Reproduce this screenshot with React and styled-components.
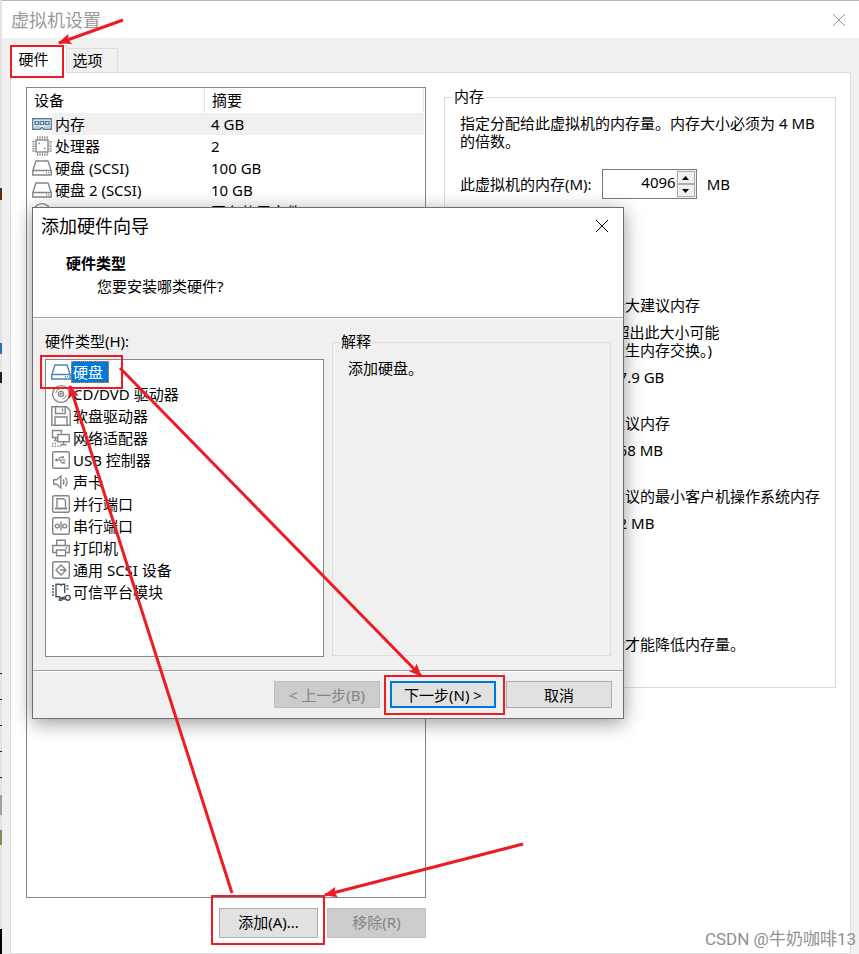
import React, { useCallback, useState } from 'react';
import styled, { createGlobalStyle } from 'styled-components';

const DEVICES = [
  { icon: 'memory', name: '内存', summary: '4 GB' },
  { icon: 'cpu', name: '处理器', summary: '2' },
  { icon: 'disk', name: '硬盘 (SCSI)', summary: '100 GB' },
  { icon: 'disk', name: '硬盘 2 (SCSI)', summary: '10 GB' },
  { icon: 'cd', name: 'CD/DVD (IDE)', summary: '正在使用文件 C:\\Downloads\\' },
];

const HARDWARE_TYPES = [
  { icon: 'disk', name: '硬盘' },
  { icon: 'cd', name: 'CD/DVD 驱动器' },
  { icon: 'floppy', name: '软盘驱动器' },
  { icon: 'network', name: '网络适配器' },
  { icon: 'usb', name: 'USB 控制器' },
  { icon: 'sound', name: '声卡' },
  { icon: 'parallel', name: '并行端口' },
  { icon: 'serial', name: '串行端口' },
  { icon: 'printer', name: '打印机' },
  { icon: 'scsi', name: '通用 SCSI 设备' },
  { icon: 'tpm', name: '可信平台模块' },
];

const ICON_SHAPES = {
  memory: (
    <>
      <path d="M.75 4.75h18.5v10.5h-7.5l-1-1.5h-1.5l-1 1.5H.75z" />
      <path d="M3 7.5h3.5v3H3zM8.25 7.5h3.5v3h-3.5zM13.5 7.5H17v3h-3.5z" />
      <path d="M2.5 13h5M12.5 13h5" strokeDasharray="1 1" />
    </>
  ),
  cpu: (
    <>
      <rect x="4" y="4" width="12" height="12" />
      <path d="M5 1.5h11M5 18.5h11" strokeWidth="2.4" strokeDasharray="1.2 1.2" />
      <path d="M1.5 5v11M18.5 5v11" strokeWidth="2.4" strokeDasharray="1.2 1.2" />
      <path d="M6.5 7.5h1.5M12 12.5h1.5" strokeWidth="1.6" />
    </>
  ),
  disk: (
    <>
      <path d="M4 3h12l3.2 9.5V17H.8v-4.5z" />
      <path d="M.8 12.5h18.4M14 14.8h1M16.2 14.8h1" />
    </>
  ),
  cd: (
    <>
      <circle cx="10" cy="10" r="8.4" />
      <circle cx="10" cy="10" r="2.6" />
      <circle cx="10" cy="10" r=".5" />
      <path d="M4.8 9.2a5.4 5.4 0 0 1 3.6-4.4M15.2 10.8a5.4 5.4 0 0 1-3.6 4.4" strokeWidth="1" />
    </>
  ),
  floppy: (
    <>
      <path d="M.8.8h14.7l3.7 3.7v14.7H.8z" />
      <path d="M4.5.8v6.7h9.7V.8M11.5 2.5v3" />
      <path d="M4 19v-8h12v8" />
    </>
  ),
  network: (
    <>
      <path d="M6.5 9.5h-5v-7h9v3M3 12.5h3M4.5 9.5v3" />
      <path d="M6.8 6.5h11.4v7.2H6.8zM12.5 14v2.5M9.5 16.8h6" />
      <path d="M1 15.5h5M1 18.3h9" strokeDasharray="1.3 1.3" />
    </>
  ),
  usb: (
    <>
      <rect x="1.7" y="1.7" width="16.6" height="16.6" rx="1.5" />
      <path d="M5.5 10h9.5M7.4 10l1.8-2.8h2M9 10l1.8 2.8h1.5" strokeWidth="1.1" />
      <path d="M4.5 10l1.5-1v2zM11.2 6.7h1.2v1h-1.2zM12.2 12.3h1.2v1h-1.2z" strokeWidth="1.1" />
    </>
  ),
  sound: (
    <>
      <path d="M2.7 7.7h3.1l4-3.7v12l-4-3.7H2.7z" />
      <path d="M12 7.5c1.2 1.5 1.2 3.5 0 5M14.3 5.8c2.2 2.4 2.2 6 0 8.4" />
    </>
  ),
  parallel: (
    <>
      <rect x="1.7" y="1.7" width="16.6" height="16.6" rx="1.5" />
      <path d="M6 13.5V4.8h6.5l2 2v6.7" />
      <path d="M4 14.5h12.3" strokeWidth="2" />
    </>
  ),
  serial: (
    <>
      <rect x="1.7" y="1.7" width="16.6" height="16.6" rx="1.5" />
      <circle cx="6.3" cy="10" r="1.9" />
      <circle cx="13.7" cy="10" r="1.9" />
      <path d="M10 5.5v9" />
    </>
  ),
  printer: (
    <>
      <path d="M5.7 7.5V2.3h8.6v5.2" />
      <path d="M5 14.5H1.7v-7h16.6v7H15" />
      <path d="M5.5 12h9v5.7h-9zM14.5 9.7H16" />
    </>
  ),
  scsi: (
    <>
      <rect x="1.7" y="1.7" width="16.6" height="16.6" rx="1.5" />
      <path d="M12.8 7.7L10 5l-5 5 5 5 2.8-2.7M9 10h6M12.8 7.7L15 10l-2.2 2.3" />
    </>
  ),
  tpm: (
    <>
      <path d="M13.7 11V2.2h-2.5L10 3.3 8.8 2.2H5v12.6h4.5" />
      <path d="M1 4h2M1 7h2M1 10h2M1 13h2M15.5 4h2M15.5 7h2" />
      <circle cx="16.8" cy="15.8" r="2.4" />
      <path d="M14.4 15l-6 1.4v1.9h2l1-1.3h3" />
    </>
  ),
};

const ICON_COLORS = {
  memory: '#55809f',
  tpm: '#405565',
};

function DeviceIcon({ type, color }) {
  return (
    <svg
      width="20"
      height="20"
      viewBox="0 0 20 20"
      fill="none"
      stroke={color || ICON_COLORS[type] || '#858585'}
      strokeWidth="1.4"
      aria-hidden="true"
    >
      {ICON_SHAPES[type]}
    </svg>
  );
}

function CloseIcon() {
  return (
    <svg width="14" height="14" viewBox="0 0 14 14" fill="none" stroke="currentColor">
      <path d="M1 1l12 12M13 1L1 13" />
    </svg>
  );
}

function MemoryGroup() {
  const [memory, setMemory] = useState(4096);
  const handleChangeMemory = useCallback((e) => {
    setMemory(Number(e.target.value) || 0);
  }, []);

  return (
    <GroupBox>
      <legend>内存</legend>
      <p>指定分配给此虚拟机的内存量。内存大小必须为 4 MB 的倍数。</p>
      <MemoryField>
        <label htmlFor="memory">此虚拟机的内存(M):</label>
        <Spinner>
          <input id="memory" type="text" value={memory} onChange={handleChangeMemory} />
          <div className="spin_buttons">
            <button type="button" aria-label="增加" onClick={() => setMemory(memory + 4)}>
              <svg width="7" height="4" viewBox="0 0 7 4"><path d="M3.5 0L7 4H0z" /></svg>
            </button>
            <button type="button" aria-label="减少" onClick={() => setMemory(memory - 4)}>
              <svg width="7" height="4" viewBox="0 0 7 4"><path d="M3.5 4L7 0H0z" /></svg>
            </button>
          </div>
        </Spinner>
        <span>MB</span>
      </MemoryField>
      <Hints>
        <div className="hint">
          <p>最大建议内存</p>
          <p>
            (超出此大小可能
            <br />
            发生内存交换。)
          </p>
          <p>27.9 GB</p>
        </div>
        <div className="hint">
          <p>建议内存</p>
          <p>768 MB</p>
        </div>
        <div className="hint">
          <p>建议的最小客户机操作系统内存</p>
          <p>32 MB</p>
        </div>
      </Hints>
      <p>必须关闭虚拟机的电源后才能降低内存量。</p>
    </GroupBox>
  );
}

function Wizard() {
  const [selected, setSelected] = useState(0);

  return (
    <StyledWizard role="dialog" aria-labelledby="wizard-title">
      <div className="wizard_header">
        <div className="wizard_title">
          <h2 id="wizard-title">添加硬件向导</h2>
          <CloseButton type="button" aria-label="关闭">
            <CloseIcon />
          </CloseButton>
        </div>
        <h3>硬件类型</h3>
        <p>您要安装哪类硬件?</p>
      </div>
      <div className="wizard_body">
        <div className="type_column">
          <div className="type_label" id="type-label">硬件类型(H):</div>
          <TypeList role="listbox" aria-labelledby="type-label">
            {HARDWARE_TYPES.map(({ icon, name }, i) => (
              <TypeItem
                key={name}
                role="option"
                aria-selected={i === selected}
                $selected={i === selected}
                onClick={() => setSelected(i)}
              >
                <DeviceIcon type={icon} color={i === selected ? '#4a86b8' : undefined} />
                <span>{name}</span>
              </TypeItem>
            ))}
          </TypeList>
        </div>
        <ExplainBox>
          <legend>解释</legend>
          <p>添加硬盘。</p>
        </ExplainBox>
      </div>
      <div className="wizard_footer">
        <Button type="button" disabled>&lt; 上一步(B)</Button>
        <Button type="button" $primary>下一步(N) &gt;</Button>
        <Button type="button">取消</Button>
      </div>
    </StyledWizard>
  );
}

function Annotations() {
  return (
    <StyledAnnotations width="859" height="954" viewBox="0 0 859 954" aria-hidden="true">
      <defs>
        <marker id="head" viewBox="0 0 12 10" refX="11" refY="5" markerWidth="13" markerHeight="11" markerUnits="userSpaceOnUse" orient="auto">
          <path d="M12 5L0 0l2 5L0 10z" fill="#ed1c24" />
        </marker>
      </defs>
      <g strokeWidth="2">
        <rect x="11" y="46" width="52" height="31" />
        <rect x="41" y="356" width="81" height="32" />
        <rect x="385" y="676" width="119" height="38" />
        <rect x="212" y="896" width="112" height="48" />
      </g>
      <g strokeWidth="3">
        <path d="M123 20L59 43" markerEnd="url(#head)" />
        <path d="M120 368L421 676" markerEnd="url(#head)" />
        <path d="M232 893L70 386" markerEnd="url(#head)" />
        <path d="M523 844L325 895" markerEnd="url(#head)" />
      </g>
    </StyledAnnotations>
  );
}

export default function App() {
  return (
    <>
      <GlobalStyle />
      <Page>
        <Backdrop />
        <SettingsWindow>
          <TitleBar>
            <h1>虚拟机设置</h1>
            <CloseButton type="button" aria-label="关闭" $muted>
              <CloseIcon />
            </CloseButton>
          </TitleBar>
          <Tabs role="tablist">
            <Tab type="button" role="tab" aria-selected="true" $active>硬件</Tab>
            <Tab type="button" role="tab" aria-selected="false">选项</Tab>
          </Tabs>
          <Panel>
            <DeviceColumn>
              <DeviceList>
                <table>
                  <colgroup>
                    <col className="icon_col" />
                    <col className="name_col" />
                    <col />
                  </colgroup>
                  <thead>
                    <tr>
                      <th colSpan="2">设备</th>
                      <th>摘要</th>
                    </tr>
                  </thead>
                  <tbody>
                    {DEVICES.map(({ icon, name, summary }, i) => (
                      <DeviceRow key={name} $selected={i === 0}>
                        <td className="icon"><DeviceIcon type={icon} /></td>
                        <td className="name">{name}</td>
                        <td className="summary">{summary}</td>
                      </DeviceRow>
                    ))}
                  </tbody>
                </table>
              </DeviceList>
              <DeviceActions>
                <Button type="button">添加(A)...</Button>
                <Button type="button" disabled>移除(R)</Button>
              </DeviceActions>
            </DeviceColumn>
            <MemoryGroup />
          </Panel>
        </SettingsWindow>
        <Wizard />
        <Annotations />
        <Watermark>CSDN @牛奶咖啡13</Watermark>
      </Page>
    </>
  );
}

const GlobalStyle = createGlobalStyle`
  * {
    box-sizing: border-box;
  }

  body {
    margin: 0;
    background: #f0f0f0;
    color: #000;
    font: 15px/18px 'Noto Sans', 'Noto Sans CJK SC', sans-serif;
  }

  h1, h2, h3, p, ul {
    margin: 0;
    padding: 0;
    list-style: none;
  }

  button, input {
    font: inherit;
    color: inherit;
    padding: 0;
    margin: 0;
  }

  svg {
    display: block;
  }
`;

const Page = styled.div`
  position: relative;
  display: flex;
  min-height: 100vh;
  overflow: hidden;
`;

/* sliver of the window that lies behind */
const Backdrop = styled.div`
  width: 2px;
  flex: none;
  background: linear-gradient(
    #e4e4e4 188px, #5a2d10 188px 200px, #e4e4e4 200px 343px,
    #2a6fc0 343px 354px, #e4e4e4 354px 372px, #222 372px 383px,
    #e4e4e4 383px 673px, #222 673px 674px, #e4e4e4 674px 699px,
    #222 699px 700px, #e4e4e4 700px 725px, #222 725px 726px,
    #e4e4e4 726px 751px, #222 751px 752px, #e4e4e4 752px 777px,
    #222 777px 778px, #e4e4e4 778px 795px, #a0a0a0 795px 815px,
    #e4e4e4 815px 830px, #8f8a4a 830px 845px, #e4e4e4 845px 929px,
    #000 929px
  );
`;

const SettingsWindow = styled.main`
  flex: 1;
  display: flex;
  flex-direction: column;
  padding-right: 8px;
  background: #f0f0f0;
`;

const TitleBar = styled.header`
  display: flex;
  align-items: center;
  justify-content: space-between;
  height: 38px;
  margin-right: -8px;
  padding: 0 13px 0 9px;
  border-top: 1px solid #b8b8b8;
  background: #fff;

  h1 {
    color: #999;
    font-size: 18px;
    font-weight: normal;
  }
`;

const CloseButton = styled.button`
  display: flex;
  border: none;
  background: none;
  color: ${({ $muted }) => ($muted ? '#999' : '#000')};
`;

const Tabs = styled.div`
  display: flex;
  align-items: flex-end;
  height: 34px;
  padding-left: 8px;
`;

const Tab = styled.button`
  position: relative;
  height: ${({ $active }) => ($active ? 28 : 24)}px;
  width: ${({ $active }) => ($active ? 57 : 51)}px;
  padding: 0 ${({ $active }) => ($active ? 10 : 9)}px 2px 0;
  margin-bottom: ${({ $active }) => ($active ? -1 : 0)}px;
  z-index: ${({ $active }) => ($active ? 1 : 0)};
  border: 1px solid #dcdcdc;
  border-bottom: none;
  border-left-width: ${({ $active }) => ($active ? 1 : 0)}px;
  background: ${({ $active }) => ($active ? '#fff' : '#f0f0f0')};
`;

const Panel = styled.section`
  flex: 1;
  display: flex;
  gap: 18px;
  margin-left: 8px;
  padding: 14px 14px 15px 15px;
  border: 1px solid #dcdcdc;
  background: #fff;
`;

const DeviceColumn = styled.div`
  display: flex;
  flex-direction: column;
  width: 400px;
  flex: none;
`;

const DeviceList = styled.div`
  flex: 1;
  padding-right: 1px;
  border: 1px solid #828790;

  table {
    width: 100%;
    border-spacing: 0;
    table-layout: fixed;
  }

  .icon_col {
    width: 25px;
  }

  .name_col {
    width: 153px;
  }

  th {
    height: 25px;
    padding: 0 0 2px 7px;
    border-right: 1px solid #e5e5e5;
    font-weight: normal;
    text-align: left;
  }
`;

const DeviceRow = styled.tr`
  td {
    height: 22px;
    padding: 0;
    white-space: nowrap;
  }

  .icon {
    padding-left: 5px;
  }

  .name {
    padding-left: 3px;
  }

  .summary {
    padding-left: 6px;
  }

  .name,
  .summary {
    background: ${({ $selected }) => ($selected ? '#f0f0f0' : 'none')};
  }
`;

const Button = styled.button`
  width: 106px;
  height: 27px;
  border: ${({ $primary }) => ($primary ? '2px solid #0078d7' : '1px solid #adadad')};
  background: #e1e1e1;

  &:disabled {
    border-color: #bfbfbf;
    background: #ccc;
    color: #838383;
  }
`;

const DeviceActions = styled.div`
  display: flex;
  justify-content: flex-end;
  gap: 9px;
  padding-top: 10px;

  ${Button} {
    width: 99px;
    height: 30px;
    padding-bottom: 2px;
  }
`;

const GroupBox = styled.fieldset`
  flex: 1;
  align-self: flex-start;
  min-width: 0;
  margin: 0;
  padding: 7px 15px 34px;
  border: 1px solid #dcdcdc;

  legend {
    margin-left: -7px;
    padding: 0 1px;
    line-height: 18px;
    padding-bottom: 2px;
  }
`;

const ExplainBox = styled(GroupBox)`
  align-self: stretch;
  margin-bottom: 1px;

  legend {
    margin-left: -8px;
  }
`;

const MemoryField = styled.div`
  display: flex;
  align-items: center;
  gap: 10px;
  margin-top: 19px;
`;

const Spinner = styled.div`
  display: flex;
  width: 95px;
  height: 30px;
  border: 1px solid #7a7a7a;

  input {
    flex: 1;
    min-width: 0;
    padding: 0 0 4px;
    border: none;
    outline: none;
    text-align: right;
  }

  .spin_buttons {
    display: flex;
    flex-direction: column;
    width: 20px;
    border: 1px solid #f0f0f0;
  }

  button {
    flex: 1;
    display: flex;
    align-items: center;
    justify-content: center;
    border: 1px solid #adadad;
    background: #f0f0f0;
  }
`;

const Hints = styled.div`
  display: flex;
  flex-direction: column;
  gap: 28px;
  margin: 97px 0 103px 150px;
  white-space: nowrap;

  .hint {
    display: flex;
    flex-direction: column;
    gap: 9px;
  }
`;

const StyledWizard = styled.section`
  position: absolute;
  top: 207px;
  left: 32px;
  z-index: 2;
  width: 592px;
  border: 1px solid #707070;
  background: #f0f0f0;
  box-shadow: 0 4px 18px rgba(0, 0, 0, 0.4);

  .wizard_header {
    padding-bottom: 22px;
    border-bottom: 1px solid #a0a0a0;
    background: #fff;

    h3 {
      margin: 8px 0 5px;
      padding-left: 33px;
      font-size: 15px;
    }

    p {
      padding-left: 64px;
    }
  }

  .wizard_title {
    display: flex;
    align-items: center;
    justify-content: space-between;
    height: 38px;
    padding: 0 14px 2px 8px;

    h2 {
      font-size: 18px;
      font-weight: normal;
    }
  }

  .wizard_body {
    display: flex;
    gap: 8px;
    padding: 13px 12px;
    border-top: 1px solid #fff;
  }

  .type_column {
    width: 279px;
  }

  .wizard_footer {
    display: flex;
    justify-content: flex-end;
    gap: 10px;
    padding: 10px 11px;
    border-top: 1px solid #a0a0a0;
    box-shadow: inset 0 1px #fff;
  }
`;

const TypeList = styled.ul`
  height: 298px;
  margin-top: 9px;
  padding: 1px 5px;
  border: 1px solid #828790;
  background: #fff;
`;

const TypeItem = styled.li`
  display: flex;
  align-items: center;
  height: 22px;
  cursor: default;

  span {
    padding: 1px ${({ $selected }) => ($selected ? 5 : 1)}px 1px 1px;
    border: 1px ${({ $selected }) => ($selected ? 'dotted #ff8728' : 'solid transparent')};
    background: ${({ $selected }) => ($selected ? '#0078d7' : 'none')};
    color: ${({ $selected }) => ($selected ? '#fff' : '#000')};
  }
`;

const StyledAnnotations = styled.svg`
  position: absolute;
  top: 0;
  left: 0;
  z-index: 3;
  fill: none;
  stroke: #ed1c24;
  pointer-events: none;

  marker {
    stroke: none;
  }
`;

const Watermark = styled.div`
  position: absolute;
  right: 3px;
  bottom: 6px;
  z-index: 4;
  color: #8f8f8f;
  font-family: Roboto, 'Noto Sans CJK SC', sans-serif;
  font-size: 17px;
  text-shadow: -1px -1px #fff;
`;
